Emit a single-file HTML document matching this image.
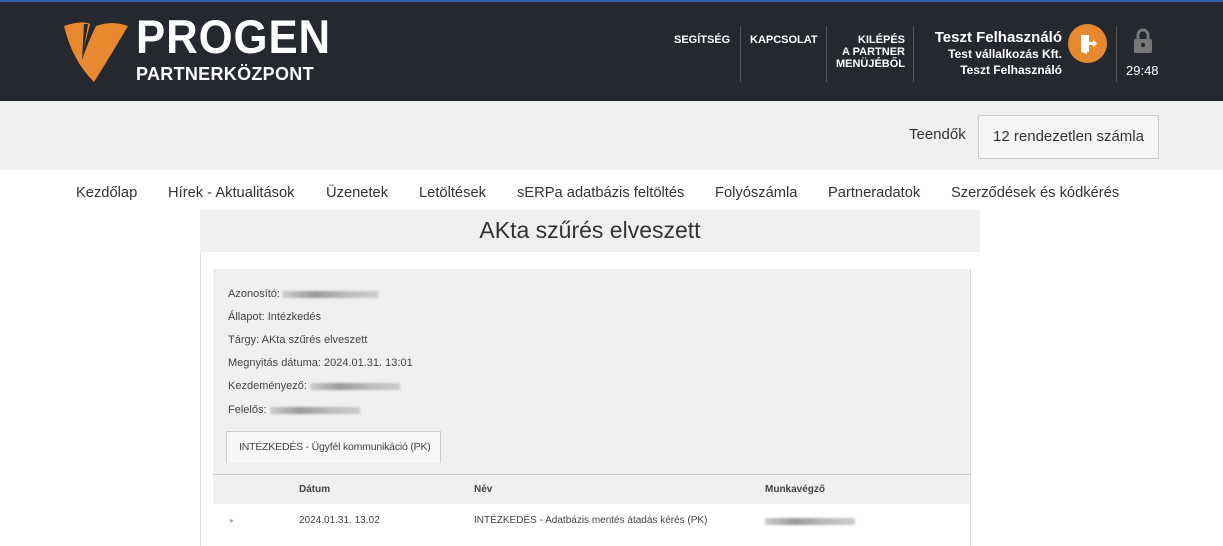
<!DOCTYPE html>
<html><head><meta charset="utf-8"><style>
*{margin:0;padding:0;box-sizing:border-box}
body{width:1223px;height:546px;overflow:hidden;background:#fff;font-family:"Liberation Sans",Arial,sans-serif;position:relative}
.hdr{position:absolute;left:0;top:0;width:1223px;height:101px;background:#262830;border-top:2px solid #2f5fb0}
.a{position:absolute;color:#fff;font-size:11px;font-weight:bold}
.sep{position:absolute;top:24px;height:56px;width:1px;background:#555}
.gray{position:absolute;left:0;top:101px;width:1223px;height:69px;background:#f0f0f0}
.nav{position:absolute;top:185px;font-size:14.7px;color:#333;white-space:nowrap}
.t{position:absolute;font-size:11px;color:#444;white-space:nowrap}
.blur{display:inline-block;height:7px;background:linear-gradient(90deg,#ccc,#999,#bbb,#ccc);vertical-align:middle;filter:blur(1px)}
</style></head><body>
<div class="hdr">
<svg style="position:absolute;left:62px;top:18px" width="68" height="64" viewBox="0 0 68 64"><path d="M2 6 Q20 0 28 4 L22 28 L20 40 Q26 22 34 6 Q50 0 66 6 Q52 30 32 62 Q10 40 2 6Z" fill="#e8892f"/><path d="M22 4 L26 4 L20 40 Z" fill="#262830"/></svg>
<div style="position:absolute;left:136px;top:10px;color:#fff;font-size:47px;font-weight:bold;letter-spacing:1px;line-height:50px;transform:scaleX(0.93);transform-origin:left">PROGEN</div>
<div style="position:absolute;left:136px;top:62px;color:#fff;font-size:18px;font-weight:bold;line-height:20px;letter-spacing:0.3px">PARTNERKÖZPONT</div>
<div class="a" style="left:674px;top:32px">SEGÍTSÉG</div>
<div class="sep" style="left:740px"></div>
<div class="a" style="left:750px;top:32px">KAPCSOLAT</div>
<div class="sep" style="left:826px"></div>
<div class="a" style="left:830px;top:32px;width:75px;text-align:right;line-height:12px">KILÉPÉS<br>A PARTNER<br>MENÜJÉBŐL</div>
<div class="sep" style="left:913px"></div>
<div class="a" style="left:900px;top:27px;width:162px;text-align:right;font-size:15px">Teszt Felhasználó</div>
<div class="a" style="left:900px;top:45px;width:162px;text-align:right;font-size:12px">Test vállalkozás Kft.</div>
<div class="a" style="left:900px;top:61px;width:162px;text-align:right;font-size:12px">Teszt Felhasználó</div>
<div style="position:absolute;left:1068px;top:22px;width:39px;height:39px;border-radius:50%;background:#e8892f"><svg width="39" height="39" viewBox="0 0 39 39"><path d="M13 11 L21 11 L21 28 L13 28Z M13 11 L19 14 L19 30 L13 28Z" fill="#fff"/><path d="M21 18 L25 18 L25 15.5 L29 19.5 L25 23.5 L25 21 L21 21Z" fill="#fff"/></svg></div>
<div class="sep" style="left:1116px"></div>
<svg style="position:absolute;left:1133px;top:26px" width="20" height="26" viewBox="0 0 20 26"><path d="M5 11 V7 A5 5 0 0 1 15 7 V11" stroke="#777" stroke-width="3" fill="none"/><rect x="1" y="11" width="18" height="14" rx="2" fill="#777"/><circle cx="10" cy="17" r="2" fill="#262830"/></svg>
<div style="position:absolute;left:1126px;top:61px;color:#fff;font-size:13px">29:48</div>
</div>
<div class="gray">
<div style="position:absolute;left:909px;top:25px;font-size:15px;color:#333">Teendők</div>
<div style="position:absolute;left:978px;top:14px;width:181px;height:44px;border:1px solid #ccc;border-radius:2px;background:#f5f5f5;font-size:15px;color:#333;text-align:center;line-height:42px">12 rendezetlen számla</div>
</div>
<div class="nav" style="left:76px">Kezdőlap</div>
<div class="nav" style="left:168px">Hírek - Aktualitások</div>
<div class="nav" style="left:326px">Üzenetek</div>
<div class="nav" style="left:419px">Letöltések</div>
<div class="nav" style="left:517px">sERPa adatbázis feltöltés</div>
<div class="nav" style="left:715px">Folyószámla</div>
<div class="nav" style="left:828px">Partneradatok</div>
<div class="nav" style="left:951px">Szerződések és kódkérés</div>
<div style="position:absolute;left:200px;top:210px;width:780px;height:42px;background:#f0f0f0;text-align:center;font-size:23px;color:#333;line-height:40px">AKta szűrés elveszett</div>
<div style="position:absolute;left:200px;top:252px;width:1px;height:294px;background:#ddd"></div>
<div style="position:absolute;left:213px;top:269px;width:758px;height:205px;background:#f0f0f0;border-right:1px solid #ddd"></div>
<div class="t" style="left:228px;top:288px">Azonosító: <span class="blur" style="width:95px"></span></div>
<div class="t" style="left:228px;top:311px">Állapot: Intézkedés</div>
<div class="t" style="left:228px;top:334px">Tárgy: AKta szűrés elveszett</div>
<div class="t" style="left:228px;top:357px">Megnyitás dátuma: 2024.01.31. 13:01</div>
<div class="t" style="left:228px;top:380px">Kezdeményező: <span class="blur" style="width:90px"></span></div>
<div class="t" style="left:228px;top:404px">Felelős: <span class="blur" style="width:90px"></span></div>
<div style="position:absolute;left:226px;top:431px;width:215px;height:32px;background:#f7f7f7;border:1px solid #ccc;border-bottom:none;font-size:10.5px;color:#444;line-height:30px;padding-left:12px;white-space:nowrap;letter-spacing:-0.2px">INTÉZKEDÉS - Ügyfél kommunikáció (PK)</div>
<div style="position:absolute;left:213px;top:474px;width:758px;height:30px;background:#f0f0f0;border-top:1px solid #ccc;border-right:1px solid #ddd"></div>
<div class="t" style="left:299px;top:484px;font-weight:bold;font-size:10px">Dátum</div>
<div class="t" style="left:474px;top:484px;font-weight:bold;font-size:10px">Név</div>
<div class="t" style="left:765px;top:484px;font-weight:bold;font-size:10px">Munkavégző</div>
<div style="position:absolute;left:970px;top:504px;width:1px;height:42px;background:#ddd"></div>
<div class="t" style="left:230px;top:516px;font-size:8px;color:#aaa">▸</div>
<div class="t" style="left:299px;top:515px;font-size:10px">2024.01.31. 13.02</div>
<div class="t" style="left:474px;top:515px;font-size:10px">INTÉZKEDÉS - Adatbázis mentés átadás kérés (PK)</div>
<div class="t" style="left:765px;top:515px"><span class="blur" style="width:90px"></span></div>
</body></html>
